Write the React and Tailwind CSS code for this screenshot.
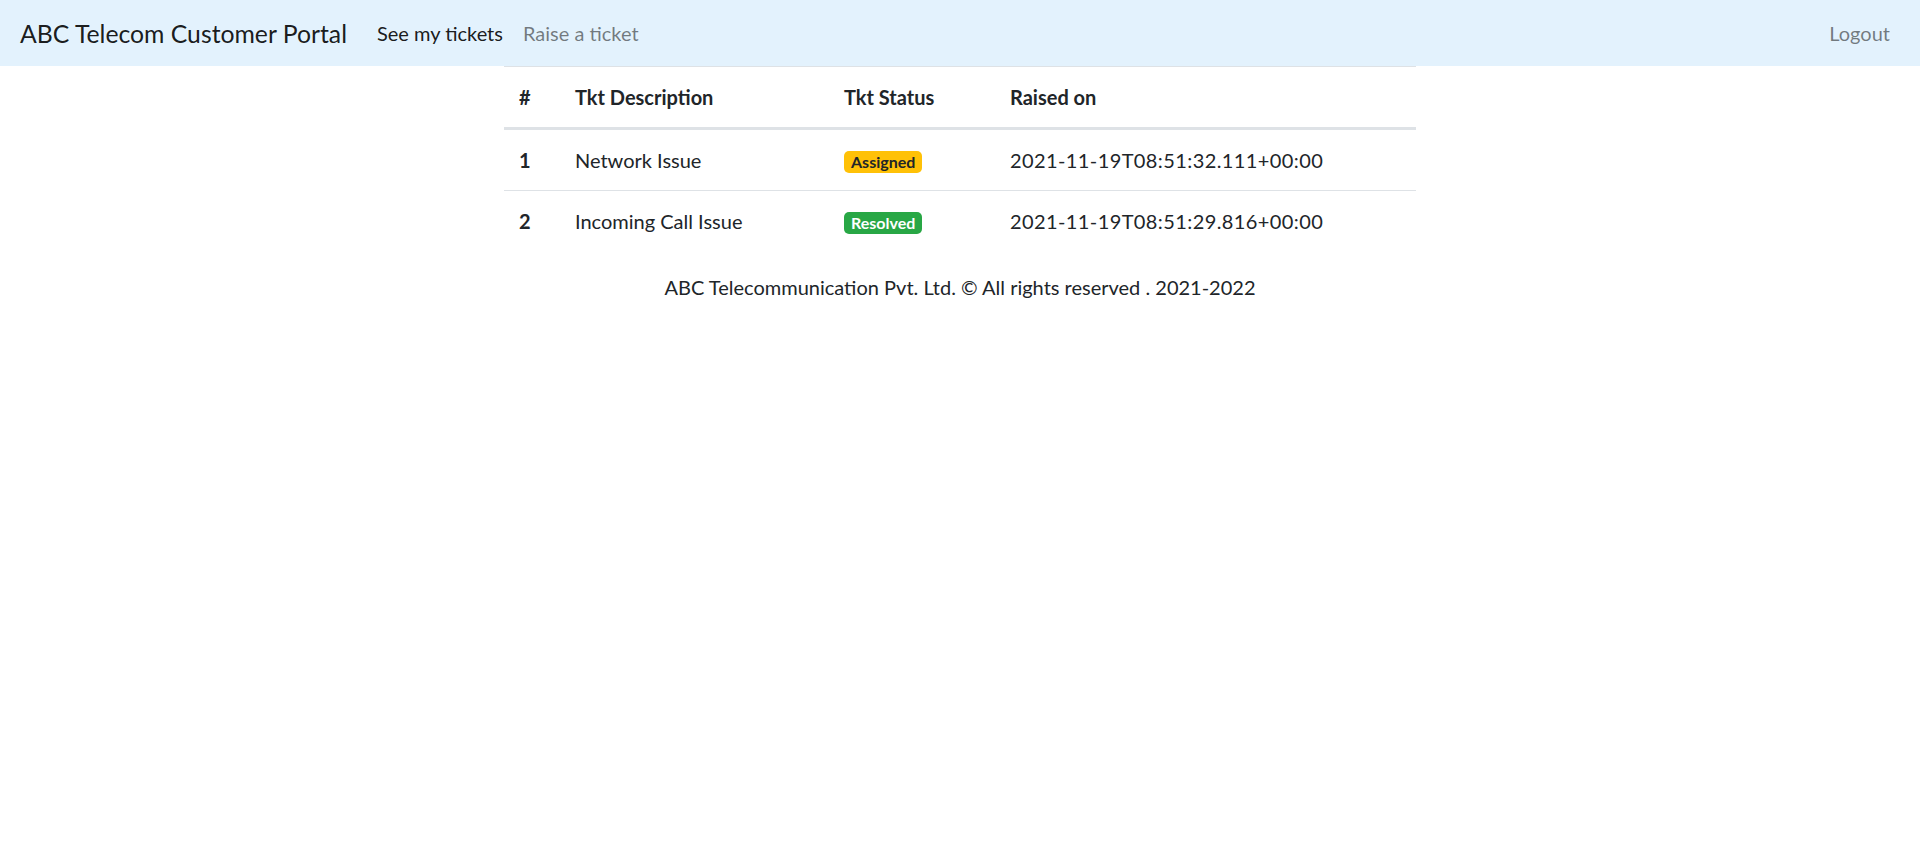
import React from "react";

const tickets = [
  { id: 1, desc: "Network Issue", status: "Assigned", raised: "2021-11-19T08:51:32.111+00:00" },
  { id: 2, desc: "Incoming Call Issue", status: "Resolved", raised: "2021-11-19T08:51:29.816+00:00" },
];

function StatusBadge({ status }) {
  if (status === "Resolved") {
    return (
      <span className="inline-block rounded-[5px] bg-[#28a745] px-[7px] py-[3px] text-[16px] font-bold leading-[16px] text-white">
        {status}
      </span>
    );
  }
  return (
    <span className="inline-block rounded-[5px] bg-[#ffc107] px-[7px] py-[3px] text-[16px] font-bold leading-[16px] text-[#212529]">
      {status}
    </span>
  );
}

export default function App() {
  return (
    <div className="min-h-screen bg-white text-[20px] text-[#212529] font-['Segoe_UI','Lato',sans-serif]">
      <nav className="flex h-[66px] items-center bg-[#e3f2fd] px-[20px]">
        <a className="mr-[20px] text-[24.75px] leading-[37px] text-black/90">ABC Telecom Customer Portal</a>
        <ul className="flex">
          <li>
            <a className="block px-[10px] leading-[30px] text-black/90">See my tickets</a>
          </li>
          <li>
            <a className="block px-[10px] leading-[30px] text-black/50">Raise a ticket</a>
          </li>
        </ul>
        <a className="ml-auto block px-[10px] leading-[30px] text-black/50">Logout</a>
      </nav>

      <div className="mx-auto w-[912px]">
        <table className="w-full border-collapse text-left">
          <thead>
            <tr>
              <th className="w-[56px] border-t border-b-[3px] border-[#dee2e6] p-[15px] leading-[30px] font-bold">#</th>
              <th className="w-[269px] border-t border-b-[3px] border-[#dee2e6] p-[15px] leading-[30px] font-bold">Tkt Description</th>
              <th className="w-[166px] border-t border-b-[3px] border-[#dee2e6] p-[15px] leading-[30px] font-bold">Tkt Status</th>
              <th className="border-t border-b-[3px] border-[#dee2e6] p-[15px] leading-[30px] font-bold">Raised on</th>
            </tr>
          </thead>
          <tbody>
            {tickets.map((t, i) => (
              <tr key={t.id}>
                <th className={(i === 0 ? "" : "border-t ") + "border-[#dee2e6] p-[15px] leading-[30px] font-bold"}>{t.id}</th>
                <td className={(i === 0 ? "" : "border-t ") + "border-[#dee2e6] p-[15px] leading-[30px]"}>{t.desc}</td>
                <td className={(i === 0 ? "" : "border-t ") + "border-[#dee2e6] p-[15px] leading-[30px]"}>
                  <StatusBadge status={t.status} />
                </td>
                <td className={(i === 0 ? "" : "border-t ") + "border-[#dee2e6] p-[15px] leading-[30px] tracking-[0.02em]"}>{t.raised}</td>
              </tr>
            ))}
          </tbody>
        </table>
        <p className="pt-[21px] text-center leading-[30px]">
          ABC Telecommunication Pvt. Ltd. © All rights reserved . 2021-2022
        </p>
      </div>
    </div>
  );
}
